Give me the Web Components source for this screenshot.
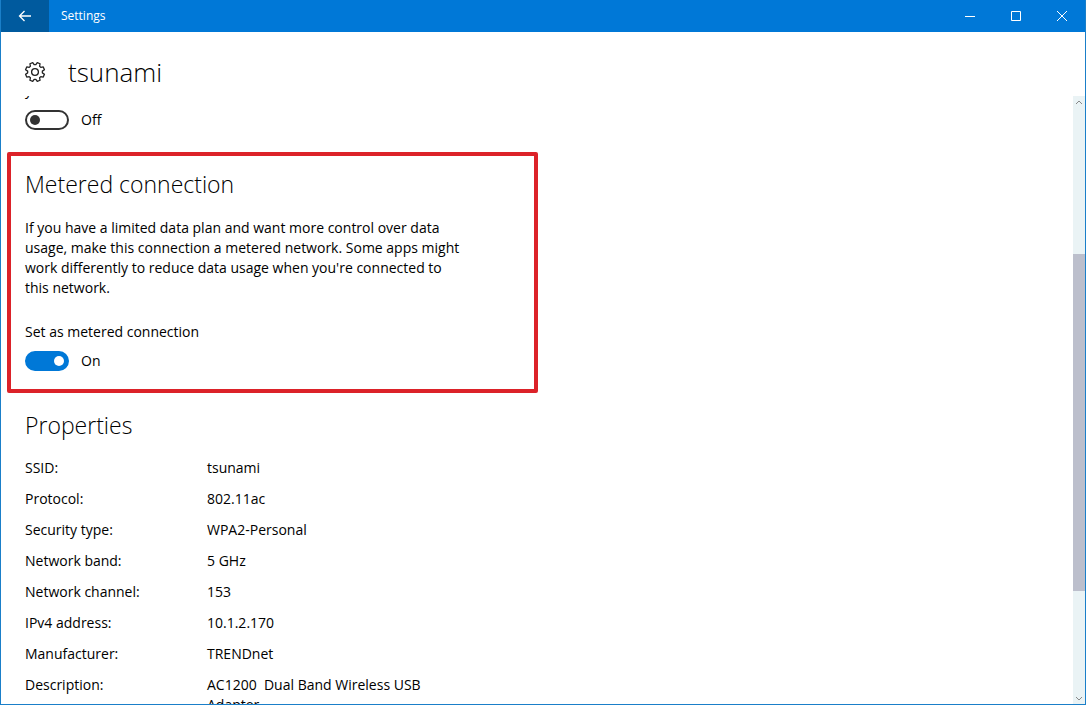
<!DOCTYPE html>
<html lang="en">
<head>
<meta charset="utf-8">
<title>Settings</title>
<style>
html, body { height: 100%; margin: 0; }
body { font: 14px/20px "Open Sans", "Noto Sans", sans-serif; color: #000; background: #fff; }
</style>
</head>
<body>
<settings-window>
  <title-bar slot="bar">Settings</title-bar>
  <page-title slot="title">tsunami</page-title>
  <scroll-pane>
    <clipped-line>y</clipped-line>
    <toggle-switch name="Discoverable"></toggle-switch>
    <metered-section></metered-section>
    <network-properties></network-properties>
  </scroll-pane>
</settings-window>
<script>
const define = (name, html, setup) => customElements.define(name, class extends HTMLElement {
  connectedCallback() {
    if (this.shadowRoot) return;
    this.attachShadow({ mode: "open" }).innerHTML = html;
    if (setup) setup(this, this.shadowRoot);
  }
});

define("settings-window", `
<style>
:host { display: flex; flex-direction: column; height: 100vh; box-sizing: border-box; border: 1px solid #1a7fc9; border-top: 0; overflow: hidden; }
::slotted(:not([slot])) { flex: 1; min-height: 0; }
</style>
<slot name="bar"></slot><slot name="title"></slot><slot></slot>`);

define("title-bar", `
<style>
:host { display: flex; flex: none; height: 32px; background: #0078d7; color: #fff; font-size: 12px; }
button { border: 0; padding: 0; background: none; color: inherit; display: grid; place-items: center; width: 46px; }
.back { width: 48px; background: #005a9e; }
.name { flex: 1; padding-left: 12px; line-height: 32px; }
svg { fill: none; stroke: currentColor; display: block; }
</style>
<button class="back" aria-label="Back"><svg width="14" height="12" viewBox="0 0 14 12" stroke-width="1.3"><path d="M13 6H1.500M6.500 1l-5 5 5 5"/></svg></button>
<span class="name"><slot></slot></span>
<button aria-label="Minimize"><svg width="10" height="10"><path d="M0 5.500h10"/></svg></button>
<button aria-label="Maximize"><svg width="10" height="10"><path d="M.5.5h9v9h-9z"/></svg></button>
<button aria-label="Close"><svg width="10" height="10"><path d="M0 0l10 10M10 0L0 10"/></svg></button>`);

define("page-title", `
<style>
:host { display: flex; flex: none; align-items: center; gap: 22px; height: 64px; padding: 16px 23px 0; box-sizing: border-box; }
h1 { margin: 0; font-size: 26px; line-height: 36px; font-weight: 300; }
svg { fill: none; stroke: #222; stroke-width: 1.3; stroke-linejoin: round; }
</style>
<svg width="22" height="22" viewBox="-11 -11 22 22" aria-hidden="true"><path/><circle r="3.400"/></svg>
<h1><slot></slot></h1>`, (host, root) => {
  // Eight teeth, with a notch on each axis.
  let points = [];
  for (let i = 0; i < 8; i++) {
    const mid = 22.5 + i * 45;
    for (const [turn, radius] of [[-16, 7.4], [-9, 9.7], [9, 9.7], [16, 7.4]]) {
      const a = (mid + turn) * Math.PI / 180;
      points.push((radius * Math.cos(a)).toFixed(2) + " " + (radius * Math.sin(a)).toFixed(2));
    }
  }
  root.querySelector("path").setAttribute("d", "M" + points.join("L") + "Z");
});

define("scroll-pane", `
<style>
:host { display: flex; overflow: hidden; }
.content { flex: 1; min-width: 0; overflow: hidden; }
.bar { flex: none; width: 12px; display: flex; flex-direction: column; background: #eaf3f5; }
button { flex: none; height: 12px; padding: 0; border: 0; background: none; display: grid; place-items: center; }
svg { fill: none; stroke: #888; }
.before { flex: 146; } .thumb { flex: 337; background: #bcbfcc; } .after { flex: 101; }
</style>
<div class="content"><slot></slot></div>
<div class="bar">
<button aria-label="Scroll up"><svg width="8" height="5"><path d="M1 4l3-3 3 3"/></svg></button>
<div class="before"></div><div class="thumb"></div><div class="after"></div>
<button aria-label="Scroll down"><svg width="8" height="5"><path d="M1 1l3 3 3-3"/></svg></button>
</div>`);

define("clipped-line", `
<style>:host { display: block; margin: -16px 24px 10px; }</style><slot></slot>`);

define("toggle-switch", `
<style>
:host { display: block; padding-left: 24px; }
label { display: inline-flex; align-items: center; gap: 12px; height: 20px; vertical-align: top; }
input { appearance: none; margin: 0; width: 44px; height: 20px; box-sizing: border-box; border: 2px solid #333; border-radius: 10px; display: flex; align-items: center; padding: 0 3px; }
input::before { content: ""; width: 10px; height: 10px; border-radius: 50%; background: #333; }
input:checked { background: #0078d7; border-color: #0078d7; justify-content: flex-end; }
input:checked::before { background: #fff; }
</style>
<label><input type="checkbox" role="switch"><span></span></label>`, (host, root) => {
  const input = root.querySelector("input");
  const state = root.querySelector("span");
  const show = () => { state.textContent = input.checked ? "On" : "Off"; };
  input.checked = host.hasAttribute("on");
  input.addEventListener("change", show);
  show();
});

define("metered-section", `
<style>
:host { display: block; box-sizing: border-box; max-width: 531px; margin: 22px 0 0 6px; padding: 12px 14px 18px; border: 4px solid #dc2229; border-radius: 2px; }
h2 { margin: 0 0 18px; font-size: 23px; line-height: 32px; font-weight: 300; }
p { margin: 0 0 24px; max-width: 442px; }
.label { margin: 0 0 9px; }
toggle-switch { padding: 0; }
</style>
<h2>Metered connection</h2>
<p>If you have a limited data plan and want more control over data usage, make this connection a metered network. Some apps might work differently to reduce data usage when you're connected to this network.</p>
<p class="label">Set as metered connection</p>
<toggle-switch on></toggle-switch>`);

define("network-properties", `
<style>
:host { display: block; margin: 16px 24px 0; }
h2 { margin: 0 0 17px; font-size: 23px; line-height: 32px; font-weight: 300; }
table { border-collapse: collapse; }
th, td { padding: 0 0 11px; text-align: left; vertical-align: top; font-weight: 400; }
th { width: 182px; }
td { width: 232px; white-space: pre-wrap; }
</style>
<h2>Properties</h2>
<table>
<tr><th scope="row">SSID:</th><td>tsunami</td></tr>
<tr><th scope="row">Protocol:</th><td>802.11ac</td></tr>
<tr><th scope="row">Security type:</th><td>WPA2-Personal</td></tr>
<tr><th scope="row">Network band:</th><td>5 GHz</td></tr>
<tr><th scope="row">Network channel:</th><td>153</td></tr>
<tr><th scope="row">IPv4 address:</th><td>10.1.2.170</td></tr>
<tr><th scope="row">Manufacturer:</th><td>TRENDnet</td></tr>
<tr><th scope="row">Description:</th><td>AC1200  Dual Band Wireless USB Adapter</td></tr>
</table>`);
</script>
</body>
</html>
